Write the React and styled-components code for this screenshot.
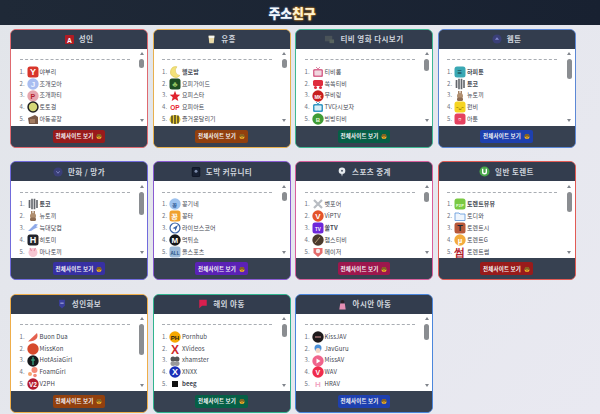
import React from 'react';
import styled, { createGlobalStyle } from 'styled-components';

const GlobalStyle = createGlobalStyle`
  html, body { margin: 0; padding: 0; }
  body {
    width: 600px;
    height: 414px;
    overflow: hidden;
    background: linear-gradient(135deg, #e2e5ea, #e9e9f1);
    font-family: "Noto Sans CJK KR", "Noto Sans", sans-serif;
  }
`;

const TopBar = styled.header`
  height: 25px;
  background: linear-gradient(90deg, #1f2937, #182131);
  display: flex;
  align-items: center;
  justify-content: center;
  padding-right: 16px;
`;

const Logo = styled.div`
  font-size: 13px;
  line-height: 14px;
  font-weight: 900;
  letter-spacing: -0.2px;
  color: #f4f7fb;
  text-shadow: 0 0 2px #4f7fc4;
  span {
    color: #fff3d0;
    text-shadow: 0 0 2px #d8861c, 0 0 2px #d8861c;
  }
`;

const Grid = styled.main`
  display: grid;
  grid-template-columns: repeat(4, 138px);
  grid-auto-rows: 119px;
  column-gap: 4.5px;
  row-gap: 13.5px;
  padding: 3.5px 0 0 10px;
`;

const Card = styled.section`
  display: flex;
  flex-direction: column;
  box-sizing: border-box;
  border: 1.5px solid ${(p) => p.$edge};
  border-radius: 6px;
  background: #374151;
  overflow: hidden;
`;

const CardHead = styled.h2`
  margin: 0;
  height: 19px;
  flex: none;
  display: flex;
  align-items: center;
  justify-content: center;
  gap: 5px;
  font-size: 7.5px;
  line-height: 10px;
  font-weight: 700;
  letter-spacing: 0.45px;
  color: #cfd4dc;
  background: #333d4e;
`;

const ListArea = styled.div`
  height: 77px;
  flex: none;
  display: flex;
  background: #fff;
`;

const Items = styled.ol`
  flex: 1;
  margin: 0;
  padding: 10.5px 0 0 8.5px;
  list-style: none;
  overflow: hidden;
`;

const Rule = styled.li`
  height: 0;
  width: 110px;
  border-top: 1px dashed #a9adb3;
  margin-bottom: 6px;
`;

const Item = styled.li`
  height: 11.8px;
  display: flex;
  align-items: center;
  font-size: 6px;
  line-height: 8px;
  letter-spacing: 0.1px;
  color: #3f4650;
`;

const Num = styled.span`
  width: 7px;
  flex: none;
  color: #6b7280;
`;

const Name = styled.span`
  margin-left: 1px;
  white-space: nowrap;
  font-weight: ${(p) => (p.$strong ? 700 : 400)};
`;

const Rail = styled.div`
  width: 9px;
  flex: none;
  display: flex;
  flex-direction: column;
  align-items: center;
  padding-top: 3.5px;
  margin-right: 1px;
`;

const Arrow = styled.i`
  width: 0;
  height: 0;
  border-left: 2.5px solid transparent;
  border-right: 2.5px solid transparent;
  ${(p) => (p.$down ? 'border-top' : 'border-bottom')}: 3px solid #80858c;
  ${(p) => (p.$down ? 'margin-top: auto; margin-bottom: 4px;' : '')}
`;

const Thumb = styled.div`
  width: 5px;
  margin-top: 4px;
  border-radius: 3px;
  background: #8a8d91;
`;

const CardFoot = styled.div`
  flex: 1;
  display: flex;
  align-items: center;
  justify-content: center;
  background: #374151;
`;

const AllButton = styled.a`
  display: flex;
  align-items: center;
  gap: 3px;
  height: 13px;
  padding: 0 3px;
  border-radius: 2px;
  background: ${(p) => p.$tone};
  color: #f4f4f5;
  font-size: 5.5px;
  line-height: 8px;
  font-weight: 700;
  letter-spacing: 0.15px;
`;

const Svg = styled.svg`
  flex: none;
  display: block;
  width: ${(p) => p.$size}px;
  height: ${(p) => p.$size}px;
`;

const Smile = () => (
  <Svg $size={6} viewBox="0 0 12 12">
    <circle cx="6" cy="7" r="5" fill="#f0b429" />
    <path d="M1 5h10v2H7.500L6 6 4.500 7H1z" fill="#222" />
    <path d="M3 2.500h6l.8 2H2.200z" fill="#6b4a1e" />
    <path d="M4 9.500h4" stroke="#7a3b10" strokeWidth="1" />
  </Svg>
);

const Pic = ({ size = 12, children }) => (
  <Svg $size={size} viewBox="0 0 12 12">{children}</Svg>
);

const Letter = ({ t, fill = '#fff', size = 7, y = 8.5, x = 6 }) => (
  <text x={x} y={y} textAnchor="middle" fontSize={size} fontWeight="900" fill={fill} fontFamily="Liberation Sans, sans-serif">{t}</text>
);

const Round = ({ bg, fg, t, size }) => (
  <Pic>
    <circle cx="6" cy="6" r="5.700" fill={bg} />
    {t && <Letter t={t} fill={fg} size={size} />}
  </Pic>
);

const Tile = ({ bg, fg, t, size }) => (
  <Pic>
    <rect x=".5" y=".5" width="11" height="11" rx="2.500" fill={bg} />
    {t && <Letter t={t} fill={fg} size={size} />}
  </Pic>
);

const Stripes = () => (
  <Pic>
    <rect x="1" y="1" width="10" height="10" rx="5" fill="#eee" />
    <path d="M2.500 2v8M5 .8v10.400M7.500 .8v10.400M10 2v8" stroke="#63676d" strokeWidth="1.600" />
  </Pic>
);

const Rabbit = () => (
  <Pic>
    <path d="M4 1h1.500v3H4zM6.500 1H8v3H6.500z" fill="#a58263" />
    <circle cx="6" cy="6" r="3" fill="#b08f70" />
    <rect x="3" y="7.500" width="6" height="3.500" rx="1.500" fill="#8d6c52" />
  </Pic>
);

const Moon = () => (
  <Pic>
    <path d="M8 .8A5.400 5.400 0 1 0 11 9.500 5 5 0 0 1 8 .8z" fill="#f2e27a" stroke="#d6bf44" strokeWidth=".5" />
  </Pic>
);

const Star = ({ fill = '#e0232e' }) => (
  <Pic>
    <path d="M6 .8l1.400 3.700 3.900.2-3 2.500 1 3.800L6 8.900 2.700 11l1-3.800-3-2.500 3.900-.2z" fill={fill} />
  </Pic>
);

const Tv = ({ bg, screen }) => (
  <Pic>
    <path d="M4 1l2 2 2-2" stroke={bg} strokeWidth=".8" fill="none" />
    <rect x="1" y="3" width="10" height="8" rx="1.500" fill={bg} />
    <rect x="2.500" y="4.500" width="7" height="5" rx=".8" fill={screen} />
  </Pic>
);

const icons = {
  yaburi: <Tile bg="#d8352a" fg="#fff" t="Y" size={9} />,
  jogae: <Round bg="#a8bdf0" fg="#eef3ff" t="J" size={8} />,
  party: <Round bg="#e6a5ad" fg="#b41d2e" t="P" size={7} />,
  toto: <Pic><circle cx="6" cy="6" r="5.700" fill="#222" /><circle cx="6" cy="6" r="4.200" fill="#d4d777" /></Pic>,
  factory: <Pic><path d="M1 5l7-3 3 2v7H2z" fill="#7a5a48" /><path d="M3 6h5v4H3z" fill="#a47d62" /></Pic>,
  moon: <Moon />,
  guide: <Tile bg="#1e4e22" fg="#90c060" t="♣" size={8} />,
  ystar: <Star />,
  op: <Pic><Letter t="OP" fill="#e8242f" size={6.500} /></Pic>,
  bee: <Pic><ellipse cx="6" cy="6.500" rx="5.500" ry="4.500" fill="#e7c92d" /><path d="M3 2.500v8M6 2v9M9 2.500v8" stroke="#222" strokeWidth="1.200" /></Pic>,
  tv: <Tv bg="#d86a90" screen="#f0d7df" />,
  ssok: <Pic><rect x="1" y="2" width="10" height="6" rx="1.500" fill="#df2d3d" /><circle cx="3.500" cy="9.500" r="1.500" fill="#df2d3d" /><circle cx="8.500" cy="9.500" r="1.500" fill="#df2d3d" /></Pic>,
  movie: <Round bg="#c81e1e" fg="#fff" t="MK" size={4.500} />,
  tvagain: <Tv bg="#3598c4" screen="#d9eef6" />,
  bing: <Round bg="#3f9c35" fg="#e9f8d8" t="B" size={6} />,
  hapi: <Tile bg="#3aa8b4" fg="#12383e" t="≡" size={8} />,
  stripes: <Stripes />,
  rabbit: <Rabbit />,
  funbi: <Tile bg="#f6d421" fg="#7a6400" t="ᵔᴗᵔ" size={5} />,
  atoon: <Tile bg="#e5415f" fg="#fff" t="▫" size={9} />,
  wolf: <Pic><path d="M1 9L8 2l3 .5-2 2 2 .5-4 2-3 2z" fill="#8ea9e8" /></Pic>,
  hitomi: <Tile bg="#23242a" fg="#fff" t="H" size={9} />,
  mana: <Pic><circle cx="6" cy="6.500" r="4.500" fill="#f6c6d2" /><path d="M3 2l1.500 3M8.500 2L7 5" stroke="#e58ca3" strokeWidth="1.200" /></Pic>,
  ggong: <Round bg="#9cc1ee" fg="#23508e" t="꽁" size={5} />,
  ggongta: <Tile bg="#f0a12e" fg="#fff" t="꽁" size={7} />,
  live: <Pic><circle cx="6" cy="6" r="5" fill="#fff" stroke="#3a63a8" strokeWidth="1.200" /><path d="M9 3L3.500 6.200l2.300.6.700 2.200z" fill="#3a63a8" /></Pic>,
  muk: <Round bg="#15161a" fg="#fff" t="M" size={8} />,
  all: <Tile bg="#9cb9d8" fg="#1f4f82" t="ALL" size={4.500} />,
  bet: <Pic><path d="M2 2l8 8M10 2l-8 8" stroke="#b8bcc2" strokeWidth="2.200" /></Pic>,
  vip: <Round bg="#e4542a" fg="#fff" t="V" size={8} />,
  sol: <Tile bg="#6d28d9" fg="#fff" t="TV" size={4.500} />,
  champ: <Pic><circle cx="6" cy="6" r="5.700" fill="#4a3a2c" /><path d="M3 9l5-6" stroke="#b39a78" strokeWidth="1" /></Pic>,
  major: <Pic><path d="M1.500 2h9v5L6 11 1.500 7z" fill="#e46a6a" /><circle cx="6" cy="5" r="2.200" fill="#f5e8e8" /></Pic>,
  tview: <Tile bg="#7ac943" fg="#eaffd8" t="P2P" size={4} />,
  todi: <Pic><path d="M1 3h4l1 1h5v6.500H1z" fill="#eef5fd" stroke="#5b94d8" strokeWidth=".8" /></Pic>,
  tsi: <Tile bg="#b8583a" fg="#1d2b3a" t="T" size={9} />,
  tg: <Round bg="#f3ab3c" fg="#fff" t="µ" size={8} />,
  tsum: <Pic><Letter t="썸" fill="#b3202b" size={11} y={10} /></Pic>,
  buon: <Pic><path d="M1 10.500L10 2c1.500 4 0 8.500-9 8.500z" fill="#e4604e" /></Pic>,
  misskon: <Round bg="#d6492b" />,
  hotasia: <Pic><circle cx="6" cy="6" r="5.700" fill="#16191c" /><path d="M6 2v8M4 5h4" stroke="#38b38a" strokeWidth="1.200" /></Pic>,
  foam: <Pic><circle cx="7.500" cy="4" r="3" fill="#f48a76" /><circle cx="3" cy="8" r="2" fill="#f6a46e" /><circle cx="8" cy="9.500" r="1.800" fill="#f48a76" /></Pic>,
  v2: <Round bg="#b31b2e" fg="#fff" t="V2" size={6.500} />,
  ph: <Round bg="#f6a800" fg="#1a1a1a" t="PH" size={6} />,
  xv: <Pic><Letter t="X" fill="#cf2a2a" size={12} y={10.500} /></Pic>,
  xh: <Pic><circle cx="4" cy="4" r="2.500" fill="#555" /><circle cx="8" cy="4" r="2.500" fill="#555" /><circle cx="4" cy="8.500" r="2.500" fill="#999" /><circle cx="8" cy="8.500" r="2.500" fill="#999" /></Pic>,
  xnxx: <Round bg="#1a2fb8" fg="#fff" t="X" size={9} />,
  beeg: <Pic><rect x="3" y="3" width="6" height="6" fill="#111" /></Pic>,
  kiss: <Pic><circle cx="6" cy="6" r="5.700" fill="#1e1a1c" /><path d="M3 6h6" stroke="#d99" strokeWidth="1" /></Pic>,
  guru: <Pic><circle cx="6" cy="5" r="3.500" fill="#4a90d9" /><circle cx="6" cy="7.500" r="2.500" fill="#f4d6c6" /></Pic>,
  miss: <Pic><circle cx="6" cy="6" r="5.700" fill="#f0648c" /><path d="M4.500 3.500l4 2.500-4 2.500z" fill="#fff" /></Pic>,
  wav: <Round bg="#ef2b4c" fg="#fff" t="V" size={7} />,
  hr: <Pic><Letter t="H" fill="#f2a7c3" size={8} /></Pic>,
};

const headIcons = {
  adult: <Pic size={9}><rect width="12" height="12" rx="1" fill="#b01c24" /><Letter t="A" size={9} y={10} /></Pic>,
  glass: <Pic size={9}><path d="M2 1h8l-1 10H3z" fill="#e8d9a8" /><path d="M2.300 1h7.400l-.2 3H2.500z" fill="#f4f4ee" /></Pic>,
  screen: <Pic size={11}><rect x="1" y="2" width="8" height="6" fill="#4a5358" /><rect x="6" y="6" width="5" height="4" fill="#59645f" /></Pic>,
  toon: <Pic size={10}><circle cx="6" cy="6" r="5.500" fill="#3a3f78" /><path d="M3.500 7l2.500-3 2.500 3z" fill="#8288d0" /></Pic>,
  manga: <Pic size={10}><circle cx="6" cy="6" r="5.500" fill="#3a3f78" /><path d="M4 5l2 2.500L8 5" stroke="#9aa0e0" strokeWidth=".8" fill="none" /></Pic>,
  gamble: <Pic size={10}><rect x="1.500" y="0.500" width="9" height="11" rx="1" fill="#172033" stroke="#0c1220" /><circle cx="6" cy="5" r="1.800" fill="#7d8cab" /></Pic>,
  sport: <Pic size={10}><circle cx="6" cy="4.500" r="4" fill="#e8ecef" /><circle cx="6" cy="4.500" r="1.300" fill="#5b6472" /><path d="M5 8.500h2L6 11.500z" fill="#c8ced3" /></Pic>,
  torrent: <Pic size={11}><circle cx="6" cy="6" r="5.500" fill="#4aa84a" /><path d="M4 3v3.500a2 2 0 0 0 4 0V3" stroke="#fff" strokeWidth="1.500" fill="none" /></Pic>,
  photo: <Pic size={10}><path d="M2.500 1h7v7L6 11.500 2.500 8z" fill="#3b3f9e" /><path d="M4 5h4" stroke="#c9ccf0" strokeWidth="1" /></Pic>,
  overseas: <Pic size={10}><path d="M1.500 1h9v7H5l-3.500 3z" fill="#d81f4f" /></Pic>,
  asian: <Pic size={11}><circle cx="6" cy="3" r="2" fill="#2a2228" /><path d="M3.500 5h5l1 6.500h-7z" fill="#e58fb4" /></Pic>,
};

const boards = [
  { title: '성인', head: 'adult', edge: '#df6a70', tone: '#991b1b', thumb: 9, items: [['야부리', 'yaburi'], ['조개모아', 'jogae'], ['조개파티', 'party'], ['토토걸', 'toto'], ['아동공장', 'factory']] },
  { title: '유흥', head: 'glass', edge: '#e8b04e', tone: '#92400e', thumb: 9, items: [['헬로밤', 'moon', true], ['요피가이드', 'guide'], ['요피스타', 'ystar'], ['요피아트', 'op'], ['즐거운달리기', 'bee']] },
  { title: '티비 영화 다시보기', head: 'screen', edge: '#3fb893', tone: '#065f46', thumb: 12, items: [['티비룸', 'tv'], ['쏙쏙티비', 'ssok'], ['무비링', 'movie'], ['TV다시보자', 'tvagain'], ['빙빙티비', 'bing']] },
  { title: '웹툰', head: 'toon', edge: '#5c88d6', tone: '#1e40af', thumb: 20, items: [['하피툰', 'hapi', true], ['툰코', 'stripes', true], ['뉴토끼', 'rabbit'], ['펀비', 'funbi'], ['아툰', 'atoon']] },
  { title: '만화 / 망가', head: 'manga', edge: '#716bdc', tone: '#3730a3', thumb: 23, items: [['툰코', 'stripes', true], ['뉴토끼', 'rabbit'], ['늑대닷컴', 'wolf'], ['히토미', 'hitomi'], ['마나토끼', 'mana']] },
  { title: '도박 커뮤니티', head: 'gamble', edge: '#8a5bd2', tone: '#5b21b6', thumb: 9, items: [['꽁기네', 'ggong'], ['꽁타', 'ggongta'], ['라이브스코어', 'live'], ['먹튀쇼', 'muk'], ['올스포츠', 'all']] },
  { title: '스포츠 중계', head: 'sport', edge: '#d85f9c', tone: '#9d174d', thumb: 10, items: [['벳포어', 'bet'], ['ViPTV', 'vip'], ['쏠TV', 'sol', true], ['챔스티비', 'champ'], ['메이저', 'major']] },
  { title: '일반 토렌트', head: 'torrent', edge: '#e25b55', tone: '#991b1b', thumb: 20, items: [['토렌트뷰뷰', 'tview', true], ['토디와', 'todi'], ['토렌트시', 'tsi'], ['토렌트G', 'tg'], ['토렌트썸', 'tsum']] },
  { title: '성인화보', head: 'photo', edge: '#efae4a', tone: '#92400e', thumb: 31, items: [['Buon Dua', 'buon'], ['MissKon', 'misskon'], ['HotAsiaGirl', 'hotasia'], ['FoamGirl', 'foam'], ['V2PH', 'v2']] },
  { title: '해외 야동', head: 'overseas', edge: '#31b48f', tone: '#065f46', thumb: 13, items: [['Pornhub', 'ph'], ['XVideos', 'xv'], ['xhamster', 'xh'], ['XNXX', 'xnxx'], ['beeg', 'beeg', true]] },
  { title: '아시안 야동', head: 'asian', edge: '#4a86dc', tone: '#1e40af', thumb: 16, items: [['KissJAV', 'kiss'], ['JavGuru', 'guru'], ['MissAV', 'miss'], ['WAV', 'wav'], ['HRAV', 'hr']] },
];

const Board = ({ board }) => (
  <Card $edge={board.edge}>
    <CardHead>
      {headIcons[board.head]}
      {board.title}
    </CardHead>
    <ListArea>
      <Items>
        <Rule />
        {board.items.map(([name, icon, strong], i) => (
          <Item key={name}>
            <Num>{i + 1}.</Num>
            {icons[icon]}
            <Name $strong={strong}>{name}</Name>
          </Item>
        ))}
      </Items>
      <Rail>
        <Arrow />
        <Thumb style={{ height: board.thumb }} />
        <Arrow $down />
      </Rail>
    </ListArea>
    <CardFoot>
      <AllButton $tone={board.tone}>
        전체사이트 보기
        <Smile />
      </AllButton>
    </CardFoot>
  </Card>
);

export default function App() {
  return (
    <>
      <GlobalStyle />
      <TopBar>
        <Logo>주소<span>친구</span></Logo>
      </TopBar>
      <Grid>
        {boards.map((board) => (
          <Board key={board.title} board={board} />
        ))}
      </Grid>
    </>
  );
}
